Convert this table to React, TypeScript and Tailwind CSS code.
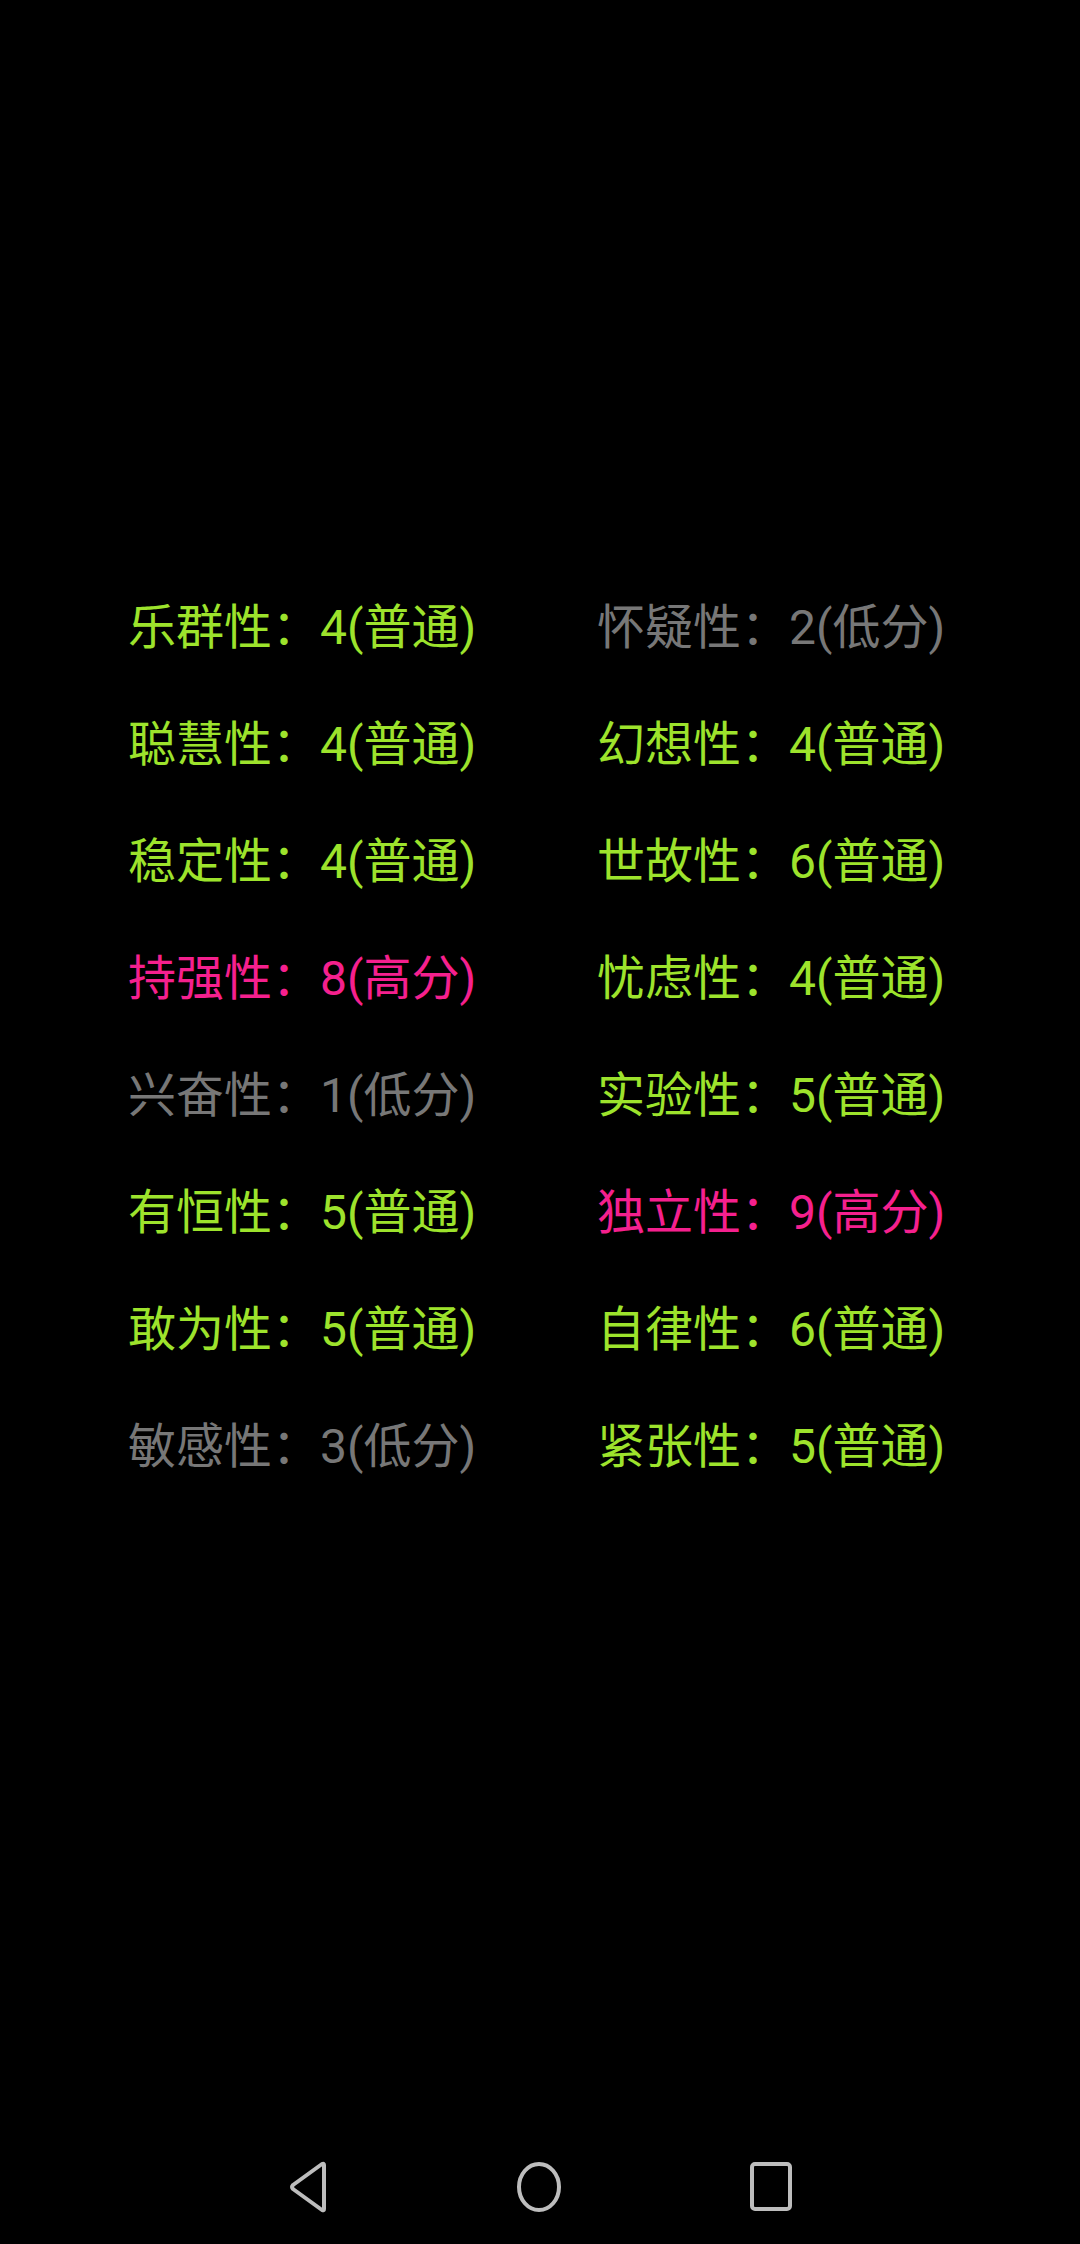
import React from "react";

type Trait = { name: string; score: number; level: "低分" | "普通" | "高分" };

const traits: Trait[] = [
  { name: "乐群性", score: 4, level: "普通" },
  { name: "怀疑性", score: 2, level: "低分" },
  { name: "聪慧性", score: 4, level: "普通" },
  { name: "幻想性", score: 4, level: "普通" },
  { name: "稳定性", score: 4, level: "普通" },
  { name: "世故性", score: 6, level: "普通" },
  { name: "持强性", score: 8, level: "高分" },
  { name: "忧虑性", score: 4, level: "普通" },
  { name: "兴奋性", score: 1, level: "低分" },
  { name: "实验性", score: 5, level: "普通" },
  { name: "有恒性", score: 5, level: "普通" },
  { name: "独立性", score: 9, level: "高分" },
  { name: "敢为性", score: 5, level: "普通" },
  { name: "自律性", score: 6, level: "普通" },
  { name: "敏感性", score: 3, level: "低分" },
  { name: "紧张性", score: 5, level: "普通" },
];

const levelColor = {
  低分: "text-[#777777]",
  普通: "text-[#9de32c]",
  高分: "text-[#f5208e]",
};

const App: React.FC = () => {
  return (
    <div
      className="flex h-[2244px] w-full flex-col bg-black"
      style={{ fontFamily: 'Roboto, "Noto Sans CJK SC", sans-serif' }}
    >
      <div className="flex-1 pt-[569px]">
        <div className="grid grid-cols-[469px_auto] pl-[128px]">
          {traits.map((t) => (
            <div
              key={t.name}
              className={`flex h-[117px] items-center text-[48px] leading-none whitespace-nowrap ${levelColor[t.level]}`}
            >
              {t.name}：{t.score}({t.level})
            </div>
          ))}
        </div>
      </div>

      {/* system nav bar */}
      <div className="flex h-[114px] items-center justify-center gap-[188px] text-[#bdbdbd]">
        <svg width="40" height="52" viewBox="0 0 40 52" fill="none">
          <path
            d="M34 3 L5 24 Q3 26 5 28 L34 49 Q36 50 36 48 V4 Q36 2 34 3 Z"
            stroke="currentColor"
            strokeWidth="4"
            strokeLinejoin="round"
          />
        </svg>
        <svg width="46" height="52" viewBox="0 0 46 52" fill="none">
          <ellipse cx="23" cy="26" rx="20" ry="23" stroke="currentColor" strokeWidth="4" />
        </svg>
        <svg width="42" height="50" viewBox="0 0 42 50" fill="none">
          <rect x="2" y="2" width="38" height="45" rx="3" stroke="currentColor" strokeWidth="4" />
        </svg>
      </div>
    </div>
  );
};

export default App;
